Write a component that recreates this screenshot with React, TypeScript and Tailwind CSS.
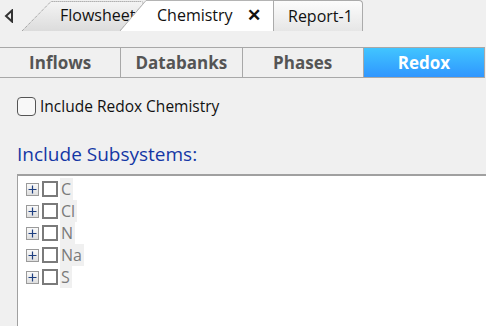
import React from "react";

const font = { fontFamily: '"Open Sans", "Noto Sans", sans-serif' };

function ArrowLeft() {
  return (
    <svg width="10" height="14" viewBox="0 0 10 14" className="mt-[1px]">
      <path d="M8 1.5 L2 7 L8 12.5 Z" fill="none" stroke="#333" strokeWidth="2" strokeLinejoin="miter" />
    </svg>
  );
}

function Expander() {
  return (
    <span className="flex h-[13px] w-[13px] items-center justify-center border border-[#9a9a9a] bg-gradient-to-b from-[#fafafa] to-[#dedede]">
      <svg width="9" height="9" viewBox="0 0 9 9">
        <path d="M4.5 0.5 V8.5 M0.5 4.5 H8.5" stroke="#1e3f80" strokeWidth="1.2" />
      </svg>
    </span>
  );
}

const elements = ["C", "Cl", "N", "Na", "S"];
const subTabs = ["Inflows", "Databanks", "Phases", "Redox"];

export default function App() {
  return (
    <div className="h-[326px] w-[486px] overflow-hidden bg-[#f0f0f0] text-[#111]" style={font}>
      {/* document tabs */}
      <div className="flex h-[31px] items-end">
        <div className="flex h-[31px] w-[22px] items-center justify-center pr-[4px]">
          <ArrowLeft />
        </div>
        <div className="relative h-[30px] w-[123px]">
          <svg className="absolute inset-0" width="123" height="30" viewBox="0 0 123 30">
            <defs>
              <linearGradient id="fs" x1="0" y1="0" x2="0" y2="1">
                <stop offset="0" stopColor="#f4f4f4" />
                <stop offset="1" stopColor="#dcdcdc" />
              </linearGradient>
            </defs>
            <path d="M0 30 L29 0.5 L118 0.5 Q122 0.5 121 3 L98 30 Z" fill="url(#fs)" />
            <path d="M0 30 L29 0.5 L118 0.5 Q122 0.5 121 3 L98 30" fill="none" stroke="#8a8a8a" strokeWidth="1" strokeDasharray="1 1" />
          </svg>
          <span className="relative block pl-[38px] pt-[3px] text-[16px] leading-[22px]">Flowsheet</span>
        </div>
        <div className="relative -ml-[25px] h-[31px] w-[153px]">
          <svg className="absolute inset-0" width="153" height="31" viewBox="0 0 153 31">
            <path d="M0 31 L26 0.5 L153 0.5 L153 31 Z" fill="#ffffff" />
            <path d="M0 31 L26 0.5 L153 0.5" fill="none" stroke="#b4b4b4" strokeWidth="1" />
          </svg>
          <div className="relative flex items-center pl-[37px] pt-[4px]">
            <span className="text-[16px] leading-[22px]">Chemistry</span>
            <span className="ml-[14px] text-[17px] font-bold leading-[22px]">✕</span>
          </div>
        </div>
        <div className="h-[31px] w-[90px] rounded-tr-[4px] border border-b-0 border-[#ababab] bg-gradient-to-b from-[#fcfcfc] to-[#e6e6e6] pl-[14px] pt-[3px]">
          <span className="text-[16px] leading-[22px]">Report-1</span>
        </div>
      </div>

      {/* property tabs */}
      <div className="mt-[16px] flex h-[31px] w-[485px] border-y border-[#a8a8a8]">
        {subTabs.map((t, i) => (
          <div
            key={t}
            className={
              "flex flex-1 items-center justify-center text-[17px] font-bold " +
              (i > 0 ? "border-l border-[#a8a8a8] " : "") +
              (t === "Redox" ? "border-r bg-gradient-to-b from-[#42c5ff] to-[#3196ff] text-white" : "text-[#555]")
            }
          >
            {t}
          </div>
        ))}
      </div>

      {/* content */}
      <div className="pl-[17px] pt-[18px]">
        <label className="flex items-center gap-[4px]">
          <span className="h-[19px] w-[19px] rounded-[4px] border border-[#555] bg-[#f8f8f8]" />
          <span className="text-[15.5px] leading-[20px]">Include Redox Chemistry</span>
        </label>
        <div className="mt-[26px] text-[19px] leading-[24px] text-[#1437a5]">Include Subsystems:</div>
        <div className="mt-[8px] h-[160px] w-[480px] border-l border-t-2 border-[#a0a0a0] bg-white pl-[8px] pt-[2px]">
          {elements.map((e) => (
            <div key={e} className="flex h-[22px] items-center">
              <Expander />
              <span className="ml-[3px] h-[16px] w-[16px] border-2 border-[#7a7a7a] bg-white" />
              <span className="ml-[2px] bg-[#f0f0f0] pl-[1px] pr-[2px] text-[16px] leading-[22px] text-[#7a7a7a]">{e}</span>
            </div>
          ))}
        </div>
      </div>
    </div>
  );
}
